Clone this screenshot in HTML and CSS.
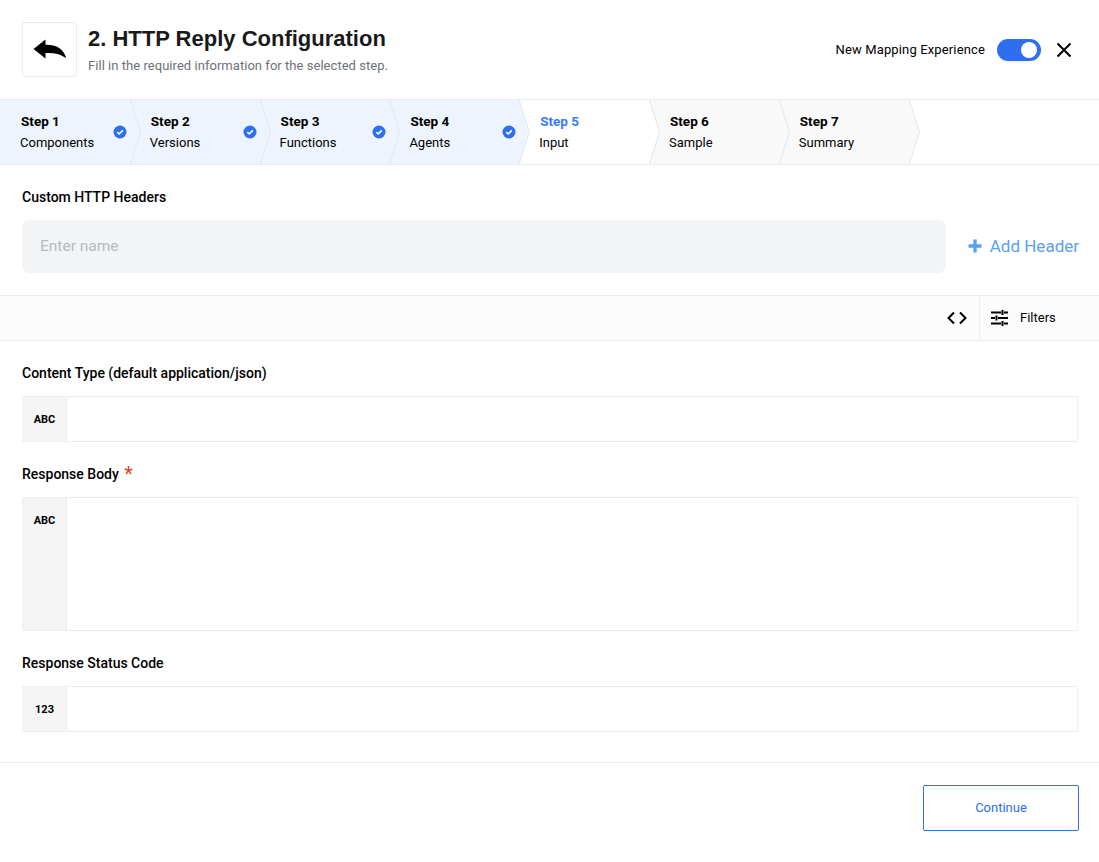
FILE: index.html
```html
<!DOCTYPE html>
<html>

<head>
    <meta charset="utf-8">
    <title>HTTP Reply Configuration</title>
    <link rel="stylesheet" href="styles.css">
</head>

<body>
<div class="header">
    <div class="back-box">
        <svg width="34" height="21" viewBox="0 0 34 21">
            <path d="M0.5 10 L12.5 0.5 V5.8 C23.5 5.6 30.5 10 33 18.5 C33 19 32.5 19 32 18.5 C27 15 21 13.6 12.5 14 V19.5 Z" fill="#000"/>
        </svg>
    </div>
    <div class="title-block">
        <h1>2. HTTP Reply Configuration</h1>
        <p>Fill in the required information for the selected step.</p>
    </div>
    <div class="header-right">
        <span class="mapping-label">New Mapping Experience</span>
        <span class="toggle"><span class="knob"></span></span>
        <svg class="close" width="16" height="16" viewBox="0 0 16 16">
            <path d="M1.5 1.5 L14.5 14.5 M14.5 1.5 L1.5 14.5" stroke="#000" stroke-width="2" fill="none"/>
        </svg>
    </div>
</div>

<div class="stepper">
    <div class="step done">
        <div class="step-text"><b>Step 1</b><span>Components</span></div>
        <svg class="check" width="14" height="14" viewBox="0 0 14 14"><circle cx="7" cy="7" r="6.5" fill="#2f6fed"/><path d="M4.3 7.2 L6.2 9 L9.8 5.4" stroke="#fff" stroke-width="1.6" fill="none"/></svg>
        <svg class="tip" width="12" height="66" viewBox="0 0 12 66"><path d="M0 0 L10.5 33 L0 66 Z" fill="#edf4fd"/><path d="M0 0 L10.5 33 L0 66" fill="none" stroke="#dfe7f5"/></svg>
    </div>
    <div class="step done">
        <div class="step-text"><b>Step 2</b><span>Versions</span></div>
        <svg class="check" width="14" height="14" viewBox="0 0 14 14"><circle cx="7" cy="7" r="6.5" fill="#2f6fed"/><path d="M4.3 7.2 L6.2 9 L9.8 5.4" stroke="#fff" stroke-width="1.6" fill="none"/></svg>
        <svg class="tip" width="12" height="66" viewBox="0 0 12 66"><path d="M0 0 L10.5 33 L0 66 Z" fill="#edf4fd"/><path d="M0 0 L10.5 33 L0 66" fill="none" stroke="#dfe7f5"/></svg>
    </div>
    <div class="step done">
        <div class="step-text"><b>Step 3</b><span>Functions</span></div>
        <svg class="check" width="14" height="14" viewBox="0 0 14 14"><circle cx="7" cy="7" r="6.5" fill="#2f6fed"/><path d="M4.3 7.2 L6.2 9 L9.8 5.4" stroke="#fff" stroke-width="1.6" fill="none"/></svg>
        <svg class="tip" width="12" height="66" viewBox="0 0 12 66"><path d="M0 0 L10.5 33 L0 66 Z" fill="#edf4fd"/><path d="M0 0 L10.5 33 L0 66" fill="none" stroke="#dfe7f5"/></svg>
    </div>
    <div class="step done">
        <div class="step-text"><b>Step 4</b><span>Agents</span></div>
        <svg class="check" width="14" height="14" viewBox="0 0 14 14"><circle cx="7" cy="7" r="6.5" fill="#2f6fed"/><path d="M4.3 7.2 L6.2 9 L9.8 5.4" stroke="#fff" stroke-width="1.6" fill="none"/></svg>
        <svg class="tip" width="12" height="66" viewBox="0 0 12 66"><path d="M0 0 L10.5 33 L0 66 Z" fill="#edf4fd"/><path d="M0 0 L10.5 33 L0 66" fill="none" stroke="#dfe7f5"/></svg>
    </div>
    <div class="step current">
        <div class="step-text"><b>Step 5</b><span>Input</span></div>
        <svg class="tip" width="12" height="66" viewBox="0 0 12 66"><path d="M0 0 L10.5 33 L0 66 Z" fill="#fff"/><path d="M0 0 L10.5 33 L0 66" fill="none" stroke="#dfe7f5"/></svg>
    </div>
    <div class="step todo">
        <div class="step-text"><b>Step 6</b><span>Sample</span></div>
        <svg class="tip" width="12" height="66" viewBox="0 0 12 66"><path d="M0 0 L10.5 33 L0 66 Z" fill="#f9f9f9"/><path d="M0 0 L10.5 33 L0 66" fill="none" stroke="#dfe7f5"/></svg>
    </div>
    <div class="step todo">
        <div class="step-text"><b>Step 7</b><span>Summary</span></div>
        <svg class="tip" width="12" height="66" viewBox="0 0 12 66"><path d="M0 0 L10.5 33 L0 66 Z" fill="#f9f9f9"/><path d="M0 0 L10.5 33 L0 66" fill="none" stroke="#dfe7f5"/></svg>
    </div>
</div>

<div class="headers-section">
    <div class="field-label">Custom HTTP Headers</div>
    <div class="headers-row">
        <div class="name-input">Enter name</div>
        <div class="add-header">
            <svg width="14" height="14" viewBox="0 0 14 14"><path d="M7 0.5 V13.5 M0.5 7 H13.5" stroke="#5aa0f2" stroke-width="3.4" fill="none"/></svg>
            <span>Add Header</span>
        </div>
    </div>
</div>

<div class="toolbar">
    <div class="code-btn">
        <svg width="20" height="14" viewBox="0 0 20 14"><path d="M7 1.5 L1.5 7 L7 12.5 M13 1.5 L18.5 7 L13 12.5" stroke="#000" stroke-width="2" fill="none"/></svg>
    </div>
    <div class="filters-btn">
        <svg width="17" height="16" viewBox="0 0 17 16"><path d="M0 2.5 H10 M13 2.5 H17 M11.5 0 V5 M0 8 H4 M7 8 H17 M5.5 5.5 V10.5 M0 13.5 H10 M13 13.5 H17 M11.5 11 V16" stroke="#000" stroke-width="2" fill="none"/></svg>
        <span>Filters</span>
    </div>
</div>

<div class="form-body">
    <div class="field-label">Content Type (default application/json)</div>
    <div class="mapped-input">
        <div class="type-tag">ABC</div>
    </div>
    <div class="field-label">Response Body <span class="required">*</span></div>
    <div class="mapped-input tall">
        <div class="type-tag">ABC</div>
    </div>
    <div class="field-label">Response Status Code</div>
    <div class="mapped-input">
        <div class="type-tag">123</div>
    </div>
</div>

<div class="footer">
    <button class="continue">Continue</button>
</div>

</body>

</html>
```

FILE: styles.css
```css
body {
    font-family: Roboto, "Liberation Sans", Arial, sans-serif;
    margin: 0;
    padding: 0;
    background-color: #fff;
    color: #000;
}

.header {
    display: flex;
    align-items: center;
    height: 99px;
    padding: 0 22px;
    box-sizing: border-box;
}

.back-box {
    display: flex;
    align-items: center;
    justify-content: center;
    width: 55px;
    height: 55px;
    box-sizing: border-box;
    border: 1px solid #eee;
    border-radius: 2px;
    margin-right: 11px;
}

.title-block h1 {
    font-family: "Liberation Sans", Arial, sans-serif;
    font-size: 22px;
    font-weight: bold;
    line-height: 28px;
    margin: 0;
    color: #1a1a1a;
}

.title-block p {
    font-size: 13px;
    letter-spacing: 0.04px;
    line-height: 18px;
    margin: 4px 0 0;
    color: #6e7178;
}

.header-right {
    display: flex;
    align-items: center;
    margin-left: auto;
    margin-right: 4px;
}

.mapping-label {
    font-size: 13px;
    letter-spacing: 0.14px;
    margin-right: 12px;
}

.toggle {
    display: flex;
    align-items: center;
    justify-content: flex-end;
    width: 44px;
    height: 22px;
    padding-right: 4px;
    box-sizing: border-box;
    background-color: #2f6fed;
    border-radius: 11px;
    margin-right: 15px;
}

.knob {
    width: 16px;
    height: 16px;
    background-color: #fff;
    border-radius: 50%;
}

.close {
    margin-right: 1px;
}

.stepper {
    display: flex;
    height: 66px;
    border-top: 1px solid #e9ecf2;
    border-bottom: 1px solid #e9ecf2;
    box-sizing: border-box;
}

.step {
    position: relative;
    display: flex;
    align-items: center;
    width: 129.8px;
    box-sizing: border-box;
    padding-left: 20px;
}

.step.done {
    background-color: #edf4fd;
}

.step.current {
    background-color: #fff;
}

.step.todo {
    background-color: #f9f9f9;
}

.step-text {
    font-size: 13px;
    line-height: 22px;
}

.step-text b {
    display: block;
    margin-left: 1px;
    font-size: 13.5px;
    font-weight: bold;
    line-height: 21px;
}

.step-text span {
    display: block;
}

.step.current b {
    color: #3b7df0;
}

.check {
    position: absolute;
    right: 3px;
    top: 25px;
    z-index: 3;
}

.tip {
    position: absolute;
    top: -1px;
    left: 100%;
    z-index: 2;
}

.headers-section {
    padding: 24px 20px 22px 22px;
}

.field-label {
    font-size: 14px;
    font-weight: 500;
    line-height: 16px;
    color: #000;
}

.headers-row {
    display: flex;
    align-items: center;
    margin-top: 15px;
}

.name-input {
    flex: 1;
    height: 53px;
    line-height: 53px;
    padding-left: 18px;
    background-color: #f3f4f6;
    border-radius: 8px;
    font-size: 15.5px;
    color: #b6bac1;
}

.add-header {
    display: flex;
    align-items: center;
    margin-left: 22px;
    margin-bottom: 2px;
    font-size: 17px;
    color: #5aa0f2;
}

.add-header span {
    margin-left: 8px;
}

.toolbar {
    display: flex;
    justify-content: flex-end;
    height: 46px;
    background-color: #fcfcfc;
    border-top: 1px solid #eee;
    border-bottom: 1px solid #eee;
    box-sizing: border-box;
}

.code-btn {
    display: flex;
    align-items: center;
    justify-content: center;
    width: 44px;
    border-right: 1px solid #eee;
}

.filters-btn {
    display: flex;
    align-items: center;
    width: 119px;
    box-sizing: border-box;
    padding-left: 11px;
    padding-bottom: 1px;
    font-size: 13px;
}

.filters-btn span {
    margin-left: 12px;
}

.form-body {
    padding: 24px 21px 30px 22px;
}

.mapped-input {
    display: flex;
    height: 46px;
    box-sizing: border-box;
    border: 1px solid #eee;
    border-radius: 2px;
    margin: 15px 0 24px;
}

.mapped-input.tall {
    height: 134px;
}

.mapped-input:last-child {
    margin-bottom: 0;
}

.type-tag {
    width: 44px;
    padding-top: 16px;
    box-sizing: border-box;
    background-color: #f5f5f5;
    border-right: 1px solid #eee;
    font-size: 11px;
    font-weight: bold;
    text-align: center;
    line-height: 14px;
}

.required {
    display: inline-block;
    height: 16px;
    margin-left: 2px;
    color: #d9402b;
    font-size: 20px;
    font-weight: normal;
    line-height: 16px;
    vertical-align: top;
}

.footer {
    display: flex;
    justify-content: flex-end;
    padding: 22px 20px 0;
    border-top: 1px solid #eee;
}

.continue {
    width: 156px;
    height: 46px;
    padding-bottom: 3px;
    background-color: #fff;
    border: 1px solid #2f6fed;
    border-radius: 2px;
    color: #2f6fed;
    font-family: Roboto, "Liberation Sans", Arial, sans-serif;
    font-size: 13px;
}
```
